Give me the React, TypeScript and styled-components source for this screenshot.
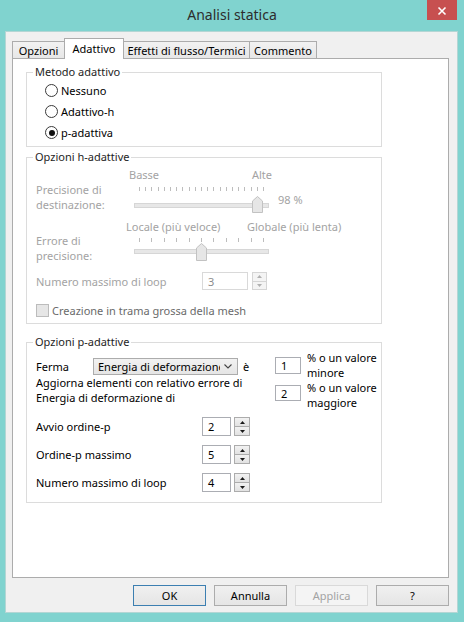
import React from "react";
import styled, { createGlobalStyle } from "styled-components";

const FONT = `"Noto Sans", "Segoe UI", sans-serif`;
const DISABLED = "#a3a3a3";

const GlobalStyle = createGlobalStyle`
  html, body { margin: 0; padding: 0; }
  body { background: #80d3cf; font-family: ${FONT}; font-size: 11px; color: #000; }
  *, *::before, *::after { box-sizing: border-box; }
`;

const Window = styled.div`
  width: 464px;
  height: 622px;
  background: #80d3cf;
  display: flex;
  flex-direction: column;
  overflow: hidden;
`;

const TitleBar = styled.div`
  flex: none;
  height: 31px;
  display: grid;
  grid-template-columns: 1fr auto 1fr;
  align-items: start;
`;

const Title = styled.div`
  grid-column: 2;
  font-size: 14px;
  line-height: 30px;
  color: #2d2d2d;
`;

const CloseButton = styled.div`
  grid-column: 3;
  justify-self: end;
  margin-right: 7px;
  width: 30px;
  height: 20px;
  background: #c75050;
  display: flex;
  align-items: center;
  justify-content: center;
`;

const Client = styled.div`
  flex: 1;
  margin: 0 6px 9px 5px;
  background: #f0f0f0;
  border: 1px solid #b3d6d4;
  display: flex;
  flex-direction: column;
`;

const TabStrip = styled.div`
  flex: none;
  height: 21px;
  margin: 6px 0 -1px 6px;
  display: flex;
  align-items: flex-end;
`;

const Tab = styled.div<{ $w: number; $active?: boolean; $first?: boolean }>`
  flex: none;
  width: ${(p) => p.$w}px;
  height: ${(p) => (p.$active ? 21 : 18)}px;
  margin-left: ${(p) => (p.$first ? 0 : -1)}px;
  border: 1px solid #acacac;
  border-bottom: none;
  background: ${(p) => (p.$active ? "#ffffff" : "linear-gradient(#f2f2f2, #e6e6e6)")};
  display: flex;
  align-items: center;
  justify-content: center;
  padding-bottom: ${(p) => (p.$active ? 2 : 0)}px;
  white-space: nowrap;
  ${(p) => (p.$active ? "position: relative; z-index: 1;" : "")}
`;

const Panel = styled.div`
  flex: none;
  height: 520px;
  margin: 0 8px 0 6px;
  background: #ffffff;
  border: 1px solid #acacac;
  padding: 5px 0 0 13px;
`;

const Group = styled.fieldset<{ $mt: number }>`
  margin: ${(p) => p.$mt}px 0 0 0;
  padding: 0;
  width: 356px;
  min-width: 0;
  border: 1px solid #dcdcdc;
`;

const Legend = styled.legend`
  margin-left: 6px;
  padding: 0 2px;
  line-height: 16px;
  font-size: 11px;
  color: #1e1e1e;
`;

const GroupBody = styled.div<{ $pl: number; $pb: number; $pt?: number }>`
  padding: ${(p) => p.$pt ?? 0}px 0 ${(p) => p.$pb}px ${(p) => p.$pl}px;
  display: flex;
  flex-direction: column;
`;

const RadioRow = styled.div`
  height: 21px;
  display: flex;
  align-items: center;
  gap: 3px;
`;

const RadioCircle = styled.span<{ $checked?: boolean }>`
  width: 13px;
  height: 13px;
  border-radius: 50%;
  border: 1px solid #3a3a3a;
  background: #ffffff;
  display: flex;
  align-items: center;
  justify-content: center;
  &::after {
    content: "";
    width: 6px;
    height: 6px;
    border-radius: 50%;
    background: ${(p) => (p.$checked ? "#111" : "transparent")};
  }
`;

const Text = styled.span<{ $disabled?: boolean; $ml?: number }>`
  color: ${(p) => (p.$disabled ? DISABLED : "#000")};
  margin-left: ${(p) => p.$ml ?? 0}px;
  white-space: nowrap;
`;

const ScaleRow = styled.div`
  height: 18px;
  display: flex;
  align-items: center;
  padding-left: 90px;
  color: ${DISABLED};
  white-space: nowrap;
`;

const ScaleText = styled.span<{ $w?: number; $pl?: number }>`
  ${(p) => (p.$w ? `width: ${p.$w}px; flex: none;` : "")}
  padding-left: ${(p) => p.$pl ?? 0}px;
`;

const SliderRow = styled.div<{ $h: number }>`
  height: ${(p) => p.$h}px;
  display: flex;
  align-items: flex-start;
`;

const SliderLabel = styled.div<{ $mt: number }>`
  width: 90px;
  flex: none;
  margin-top: ${(p) => p.$mt}px;
  line-height: 15px;
  color: ${DISABLED};
`;

const SliderValue = styled.span<{ $h: number }>`
  margin-left: 2px;
  line-height: ${(p) => p.$h}px;
  color: ${DISABLED};
`;

const FieldRow = styled.div<{ $mt: number; $h: number }>`
  margin-top: ${(p) => p.$mt}px;
  height: ${(p) => p.$h}px;
  display: flex;
  align-items: center;
`;

const FieldLabel = styled.span<{ $w: number; $disabled?: boolean }>`
  width: ${(p) => p.$w}px;
  flex: none;
  white-space: nowrap;
  color: ${(p) => (p.$disabled ? DISABLED : "#000")};
`;

const NumInput = styled.div<{ $w: number; $h: number; $disabled?: boolean; $mt?: number }>`
  flex: none;
  width: ${(p) => p.$w}px;
  height: ${(p) => p.$h}px;
  margin-top: ${(p) => p.$mt ?? 0}px;
  border: 1px solid ${(p) => (p.$disabled ? "#d9d9d9" : "#abadb3")};
  background: #ffffff;
  color: ${(p) => (p.$disabled ? "#8c8c8c" : "#000")};
  padding-left: 5px;
  display: flex;
  align-items: center;
`;

const Spin = styled.div<{ $w: number; $h: number; $ml: number }>`
  flex: none;
  width: ${(p) => p.$w}px;
  height: ${(p) => p.$h}px;
  margin-left: ${(p) => p.$ml}px;
  display: flex;
  flex-direction: column;
`;

const SpinHalf = styled.div<{ $disabled?: boolean; $second?: boolean }>`
  flex: 1;
  margin-top: ${(p) => (p.$second ? -1 : 0)}px;
  border: 1px solid ${(p) => (p.$disabled ? "#d5d5d5" : "#acacac")};
  background: ${(p) => (p.$disabled ? "#f4f4f4" : "linear-gradient(#f2f2f2, #e2e2e2)")};
  display: flex;
  align-items: center;
  justify-content: center;
`;

const CheckRow = styled.div`
  margin-top: 11px;
  height: 18px;
  display: flex;
  align-items: center;
  gap: 3px;
`;

const CheckBox = styled.span`
  width: 13px;
  height: 13px;
  border: 1px solid #bcbcbc;
  background: #e6e6e6;
`;

const CheckLabel = styled.span`
  color: #6a6a6a;
  white-space: nowrap;
`;

const PRow = styled.div<{ $h: number; $mt: number }>`
  height: ${(p) => p.$h}px;
  margin-top: ${(p) => p.$mt}px;
  display: grid;
  grid-template-columns: 233px 26px auto;
  column-gap: 6px;
  align-items: start;
`;

const PLeft = styled.div`
  align-self: stretch;
  display: flex;
  align-items: center;
`;

const PLabel = styled.div<{ $mt: number }>`
  margin-top: ${(p) => p.$mt}px;
  line-height: 15px;
  white-space: nowrap;
`;

const SideText = styled.div<{ $mt: number }>`
  margin-top: ${(p) => p.$mt}px;
  line-height: 15px;
  white-space: nowrap;
`;

const SelectBox = styled.div`
  flex: none;
  width: 145px;
  height: 17px;
  border: 1px solid #acacac;
  background: linear-gradient(#f2f2f2, #e5e5e5);
  display: flex;
  align-items: center;
  padding: 0 4px 0 4px;
`;

const SelectText = styled.span`
  flex: 1;
  overflow: hidden;
  white-space: nowrap;
`;

const ButtonBar = styled.div`
  flex: none;
  display: flex;
  justify-content: flex-end;
  gap: 8px;
  margin: 7px 8px 0 0;
`;

const DlgButton = styled.button<{ $primary?: boolean }>`
  width: 73px;
  height: 21px;
  padding: 0;
  font: 11px ${FONT};
  color: #000;
  border: 1px solid ${(p) => (p.$primary ? "#3c7fb1" : "#acacac")};
  background: linear-gradient(#f0f0f0, #e5e5e5);
  &:disabled {
    color: ${DISABLED};
    border-color: #d9d9d9;
    background: #f4f4f4;
  }
`;

function Arrow({ up, disabled }: { up?: boolean; disabled?: boolean }) {
  return (
    <svg width="5" height="3" viewBox="0 0 5 3">
      <polygon
        points={up ? "0,3 5,3 2.5,0" : "0,0 5,0 2.5,3"}
        fill={disabled ? "#b0b0b0" : "#1a1a1a"}
      />
    </svg>
  );
}

function SpinBox({ w, h, ml, disabled }: { w: number; h: number; ml: number; disabled?: boolean }) {
  return (
    <Spin $w={w} $h={h} $ml={ml}>
      <SpinHalf $disabled={disabled}>
        <Arrow up disabled={disabled} />
      </SpinHalf>
      <SpinHalf $disabled={disabled} $second>
        <Arrow disabled={disabled} />
      </SpinHalf>
    </Spin>
  );
}

function Slider({
  h,
  ticks,
  tickY,
  trackY,
  thumbX,
  thumbTop,
  thumbH,
}: {
  h: number;
  ticks: number;
  tickY: number;
  trackY: number;
  thumbX: number;
  thumbTop: number;
  thumbH: number;
}) {
  const x0 = 13;
  const x1 = 137;
  const step = (x1 - x0) / (ticks - 1);
  const tx = Array.from({ length: ticks }, (_, i) => Math.round(x0 + i * step) + 0.5);
  const b = thumbTop + thumbH;
  return (
    <svg width="150" height={h} viewBox={`0 0 150 ${h}`} style={{ flex: "none" }}>
      {tx.map((x, i) => (
        <line key={i} x1={x} x2={x} y1={tickY} y2={tickY + 4} stroke="#bdbdbd" strokeWidth="1" />
      ))}
      <rect x="8.5" y={trackY + 0.5} width="134" height="4" fill="#e7e7e7" stroke="#d6d6d6" />
      <polygon
        points={`${thumbX + 0.5},${thumbTop + 5} ${thumbX + 5.5},${thumbTop + 0.5} ${thumbX + 10.5},${thumbTop + 5} ${thumbX + 10.5},${b - 0.5} ${thumbX + 0.5},${b - 0.5}`}
        fill="#e6e6e6"
        stroke="#c2c2c2"
      />
    </svg>
  );
}

export default function App() {
  return (
    <>
      <GlobalStyle />
      <Window>
        <TitleBar>
          <Title>Analisi statica</Title>
          <CloseButton>
            <svg width="30" height="20" viewBox="0 0 30 20">
              <path d="M11.5 7.5 L18.5 14.5 M18.5 7.5 L11.5 14.5" stroke="#fff" strokeWidth="1.6" />
            </svg>
          </CloseButton>
        </TitleBar>
        <Client>
          <TabStrip>
            <Tab $w={53} $first>Opzioni</Tab>
            <Tab $w={60} $active>Adattivo</Tab>
            <Tab $w={127}>Effetti di flusso/Termici</Tab>
            <Tab $w={68}>Commento</Tab>
          </TabStrip>
          <Panel>
            <Group $mt={0}>
              <Legend>Metodo adattivo</Legend>
              <GroupBody $pl={18} $pb={3}>
                <RadioRow>
                  <RadioCircle />
                  <Text>Nessuno</Text>
                </RadioRow>
                <RadioRow>
                  <RadioCircle />
                  <Text>Adattivo-h</Text>
                </RadioRow>
                <RadioRow>
                  <RadioCircle $checked />
                  <Text>p-adattiva</Text>
                </RadioRow>
              </GroupBody>
            </Group>

            <Group $mt={2}>
              <Legend>Opzioni h-adattive</Legend>
              <GroupBody $pl={9} $pb={4}>
                <ScaleRow>
                  <ScaleText $w={126} $pl={3}>Basse</ScaleText>
                  <ScaleText>Alte</ScaleText>
                </ScaleRow>
                <SliderRow $h={34}>
                  <SliderLabel $mt={-1}>
                    Precisione di
                    <br />
                    destinazione:
                  </SliderLabel>
                  <Slider h={34} ticks={21} tickY={4} trackY={20} thumbX={126} thumbTop={13} thumbH={17} />
                  <SliderValue $h={34}>98 %</SliderValue>
                </SliderRow>
                <ScaleRow>
                  <ScaleText $w={121}>Locale (più veloce)</ScaleText>
                  <ScaleText>Globale (più lenta)</ScaleText>
                </ScaleRow>
                <SliderRow $h={32}>
                  <SliderLabel $mt={-2}>
                    Errore di
                    <br />
                    precisione:
                  </SliderLabel>
                  <Slider h={32} ticks={11} tickY={3} trackY={14} thumbX={70} thumbTop={8} thumbH={18} />
                </SliderRow>
                <FieldRow $mt={5} $h={18}>
                  <FieldLabel $w={166} $disabled>
                    Numero massimo di loop
                  </FieldLabel>
                  <NumInput $w={46} $h={18} $disabled>
                    3
                  </NumInput>
                  <SpinBox w={15} h={18} ml={4} disabled />
                </FieldRow>
                <CheckRow>
                  <CheckBox />
                  <CheckLabel>Creazione in trama grossa della mesh</CheckLabel>
                </CheckRow>
              </GroupBody>
            </Group>

            <Group $mt={10}>
              <Legend>Opzioni p-adattive</Legend>
              <GroupBody $pl={9} $pb={10}>
                <PRow $h={25} $mt={2}>
                  <PLeft>
                    <FieldLabel $w={57}>Ferma</FieldLabel>
                    <SelectBox>
                      <SelectText>Energia di deformazione</SelectText>
                      <svg width="8" height="5" viewBox="0 0 8 5" style={{ marginLeft: 4, marginRight: 1 }}>
                        <polyline points="0.5,0.5 4,4 7.5,0.5" fill="none" stroke="#444" strokeWidth="1.1" />
                      </svg>
                    </SelectBox>
                    <Text $ml={5}>è</Text>
                  </PLeft>
                  <NumInput $w={26} $h={17} $mt={5}>
                    1
                  </NumInput>
                  <SideText $mt={-2}>
                    % o un valore
                    <br />
                    minore
                  </SideText>
                </PRow>
                <PRow $h={26} $mt={0}>
                  <PLabel $mt={-2}>
                    Aggiorna elementi con relativo errore di
                    <br />
                    Energia di deformazione di
                  </PLabel>
                  <NumInput $w={26} $h={16} $mt={8}>
                    2
                  </NumInput>
                  <SideText $mt={3}>
                    % o un valore
                    <br />
                    maggiore
                  </SideText>
                </PRow>
                <FieldRow $mt={14} $h={19}>
                  <FieldLabel $w={166}>Avvio ordine-p</FieldLabel>
                  <NumInput $w={29} $h={19}>
                    2
                  </NumInput>
                  <SpinBox w={16} h={19} ml={3} />
                </FieldRow>
                <FieldRow $mt={9} $h={19}>
                  <FieldLabel $w={166}>Ordine-p massimo</FieldLabel>
                  <NumInput $w={29} $h={19}>
                    5
                  </NumInput>
                  <SpinBox w={16} h={19} ml={3} />
                </FieldRow>
                <FieldRow $mt={9} $h={19}>
                  <FieldLabel $w={166}>Numero massimo di loop</FieldLabel>
                  <NumInput $w={29} $h={19}>
                    4
                  </NumInput>
                  <SpinBox w={16} h={19} ml={3} />
                </FieldRow>
              </GroupBody>
            </Group>
          </Panel>
          <ButtonBar>
            <DlgButton $primary>OK</DlgButton>
            <DlgButton>Annulla</DlgButton>
            <DlgButton disabled>Applica</DlgButton>
            <DlgButton>?</DlgButton>
          </ButtonBar>
        </Client>
      </Window>
    </>
  );
}
